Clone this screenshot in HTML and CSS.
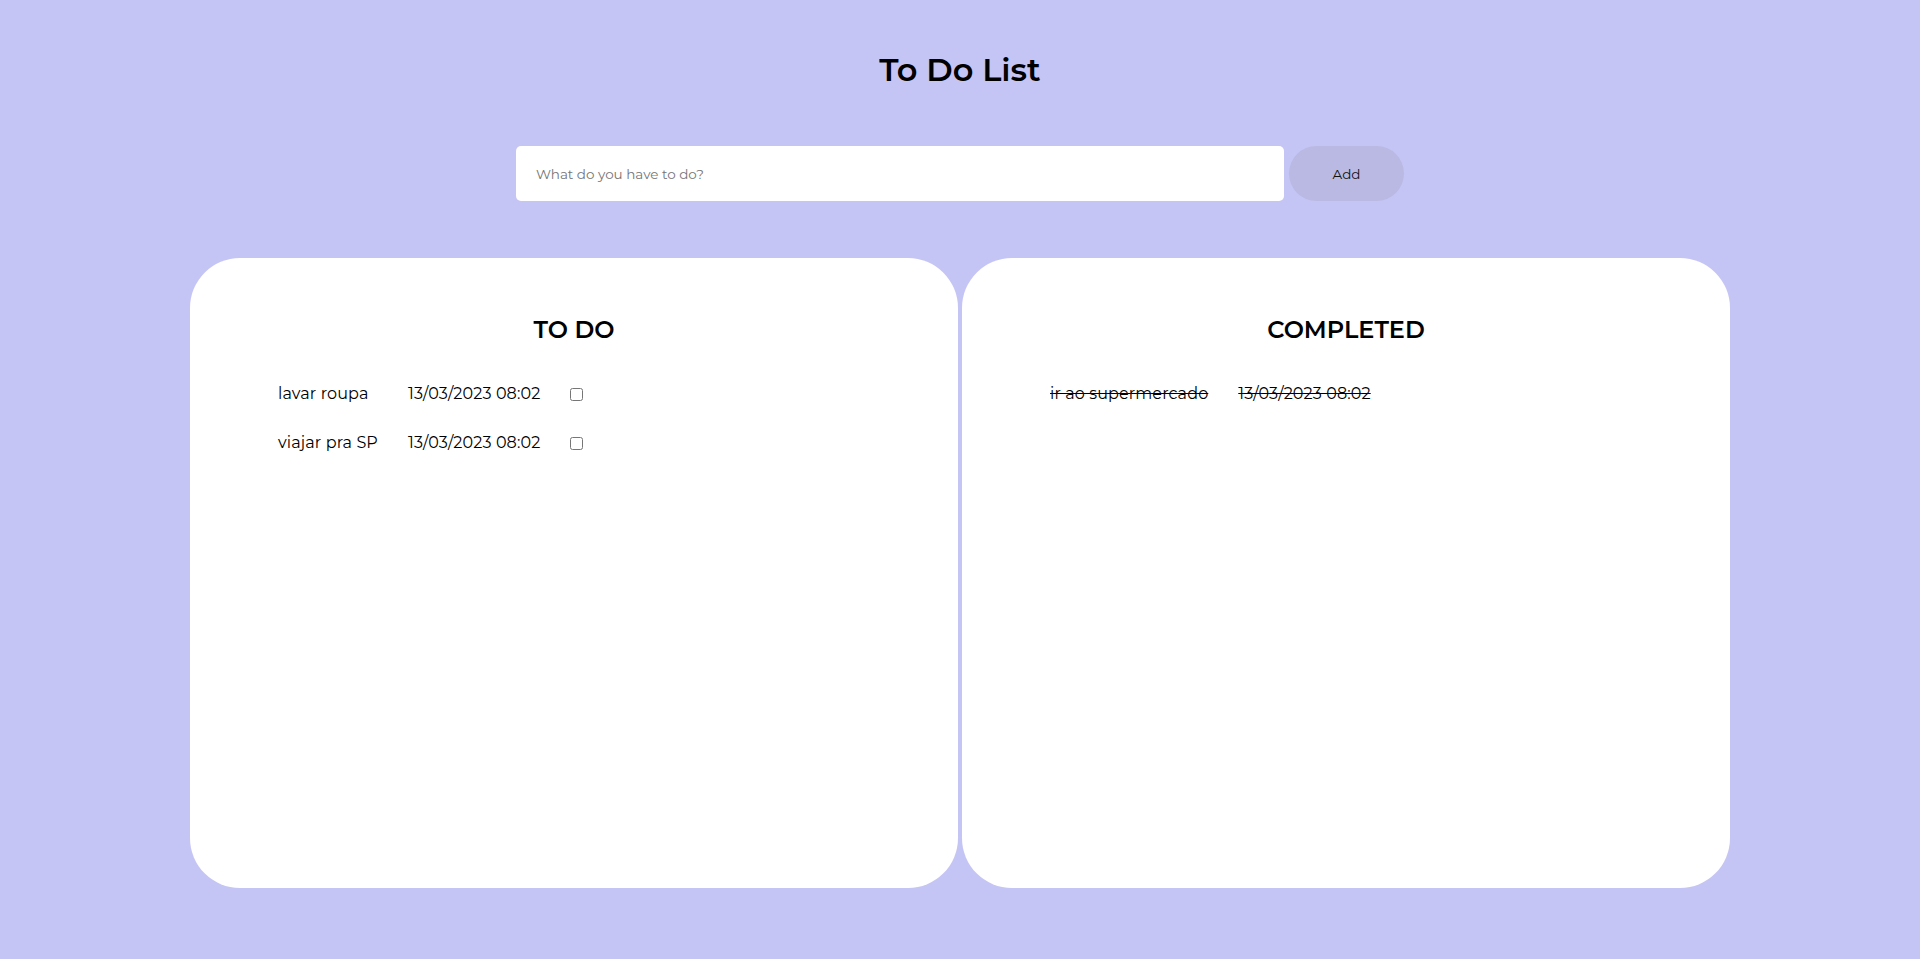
FILE: index.html
```html
<!DOCTYPE html>
<html lang="en">
<head>
<meta charset="utf-8">
<title>To Do List</title>
<link rel="stylesheet" href="styles.css">
</head>
<body>
  <header class="header">
    <h1 class="title">To Do List</h1>
  </header>
  <form class="add-form">
    <input class="add-input" type="text" placeholder="What do you have to do?">
    <button class="add-button" type="button">Add</button>
  </form>
  <main class="boards">
    <section class="board">
      <h2 class="board-title">TO DO</h2>
      <div class="task-list">
        <span class="task-name">lavar roupa</span>
        <span class="task-date">13/03/2023 08:02</span>
        <input class="task-check" type="checkbox">
        <span class="task-name">viajar pra SP</span>
        <span class="task-date">13/03/2023 08:02</span>
        <input class="task-check" type="checkbox">
      </div>
    </section>
    <section class="board">
      <h2 class="board-title">COMPLETED</h2>
      <div class="task-list done-list">
        <span class="task-name done">ir ao supermercado</span>
        <span class="task-date done">13/03/2023 08:02</span>
      </div>
    </section>
  </main>
</body>
</html>
```
FILE: styles.css
```css
* {
  box-sizing: border-box;
}

body {
  margin: 0;
  min-height: 959px;
  background: #c5c5f5;
  font-family: "Montserrat", "Open Sans", "DejaVu Sans", sans-serif;
  color: #000;
}

.header {
  padding-top: 50px;
}

.title {
  margin: 0;
  text-align: center;
  font-size: 32px;
  line-height: 40px;
  font-weight: 600;
}

.add-form {
  margin-top: 56px;
  display: flex;
  justify-content: center;
  gap: 5px;
}

.add-input {
  width: 768px;
  height: 55px;
  border: none;
  border-radius: 5px;
  background: #fff;
  padding: 0 20px;
  font-family: inherit;
  font-size: 13.5px;
  color: #000;
  outline: none;
}

.add-input::placeholder {
  color: #757575;
}

.add-button {
  width: 115px;
  height: 55px;
  border: none;
  border-radius: 28px;
  background: #bab9e3;
  font-family: inherit;
  font-size: 13.5px;
  color: #111;
}

.boards {
  margin-top: 57px;
  display: flex;
  justify-content: center;
  gap: 4px;
}

.board {
  width: 768px;
  height: 630px;
  background: #fff;
  border-radius: 50px;
  padding-top: 57px;
}

.board-title {
  margin: 0;
  text-align: center;
  font-size: 24px;
  line-height: 30px;
  font-weight: 600;
}

.task-list {
  margin-top: 39px;
  padding-left: 88px;
  display: grid;
  grid-template-columns: auto auto 13px;
  justify-content: start;
  align-items: center;
  column-gap: 30px;
  row-gap: 29px;
  font-size: 16px;
  line-height: 20px;
  font-weight: 400;
  letter-spacing: 0.12px;
}

.done-list {
  grid-template-columns: auto auto;
}

.task-check {
  margin: 0;
  width: 13px;
  height: 13px;
}

.done {
  text-decoration: line-through;
}
```
